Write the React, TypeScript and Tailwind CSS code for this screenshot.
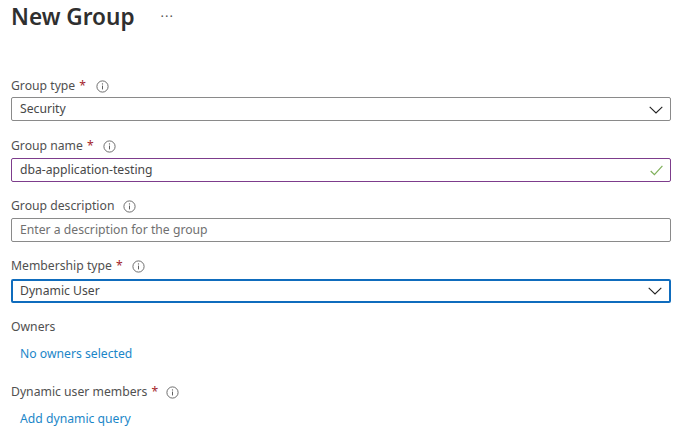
function Info() {
  return (
    <svg width="13" height="13" viewBox="0 0 13 13" fill="none" className="shrink-0">
      <circle cx="6.5" cy="6.5" r="5.6" stroke="#5f5f5f" strokeWidth="0.9" />
      <path d="M6.5 5.6V9.4" stroke="#5f5f5f" strokeWidth="1" />
      <circle cx="6.5" cy="3.9" r="0.65" fill="#5f5f5f" />
    </svg>
  );
}
function Chevron() {
  return (
    <svg width="14" height="8" viewBox="0 0 14 8" fill="none" className="shrink-0">
      <path d="M0.7 0.8L7 7L13.3 0.8" stroke="#222222" strokeWidth="1.1" />
    </svg>
  );
}
function Check() {
  return (
    <svg width="13" height="11" viewBox="0 0 13 11" fill="none" className="shrink-0">
      <path d="M0.7 6L4.4 9.7L12.4 0.8" stroke="#7fb05a" strokeWidth="1.2" />
    </svg>
  );
}
function Label({ text, required, gap }: { text: string; required?: boolean; gap: string }) {
  return (
    <div className="flex h-5 items-center text-[12.2px] text-[#505050]">
      <span>{text}</span>
      {required && <span className="ml-1 text-[#a4262c]">*</span>}
      <span className={gap}>
        <Info />
      </span>
    </div>
  );
}
function Field({
  children,
  border,
  right,
  muted,
}: {
  children: string;
  border: string;
  right?: React.ReactNode;
  muted?: boolean;
}) {
  return (
    <div className={`flex h-6 items-center justify-between rounded-[2px] pr-[7px] text-[12.2px] ${border} ${muted ? "text-[#707070]" : "text-[#474747]"}`}>
      <span>{children}</span>
      {right}
    </div>
  );
}
export default function App() {
  return (
    <div className="h-[431px] w-[689px] overflow-hidden bg-white pl-[11px] pr-[18px] font-['Noto_Sans',sans-serif]">
      <div className="flex h-[76px] items-start">
        <h1 className="mt-[1px] text-[22.6px] leading-8 font-semibold text-[#2f2f2f]">New Group</h1>
        <span className="ml-[26px] mt-[8px] text-[13px] leading-4 tracking-[1px] text-[#555555]">···</span>
      </div>
      <Label text="Group type" required gap="ml-[10px]" />
      <div className="mt-[1px]">
        <Field border="border border-[#8a8a8a] pl-2 pt-[1px]" right={<Chevron />}>Security</Field>
      </div>
      <div className="mt-[15px]">
        <Label text="Group name" required gap="ml-[9px]" />
      </div>
      <div className="mt-[2px]">
        <Field border="border border-[#7d3c8c] pl-2" right={<Check />}>dba-application-testing</Field>
      </div>
      <div className="mt-[14px]">
        <Label text="Group description" gap="ml-[9px]" />
      </div>
      <div className="mt-[2px]">
        <Field border="border border-[#8a8a8a] pl-2" muted>Enter a description for the group</Field>
      </div>
      <div className="mt-[14px]">
        <Label text="Membership type" required gap="ml-[9px]" />
      </div>
      <div className="mt-[3px]">
        <Field border="border-2 border-[#0f6cbd] pl-[7px]" right={<Chevron />}>Dynamic User</Field>
      </div>
      <div className="mt-[14px]">
        <Label text="Owners" gap="hidden" />
      </div>
      <div className="mt-[7px] h-5 pl-[9px] text-[12.2px] leading-5 text-[#1b86c8]">No owners selected</div>
      <div className="mt-[18px]">
        <Label text="Dynamic user members" required gap="ml-[8px]" />
      </div>
      <div className="mt-[7px] h-5 pl-[9px] text-[12.2px] leading-5 text-[#1b86c8]">Add dynamic query</div>
    </div>
  );
}
